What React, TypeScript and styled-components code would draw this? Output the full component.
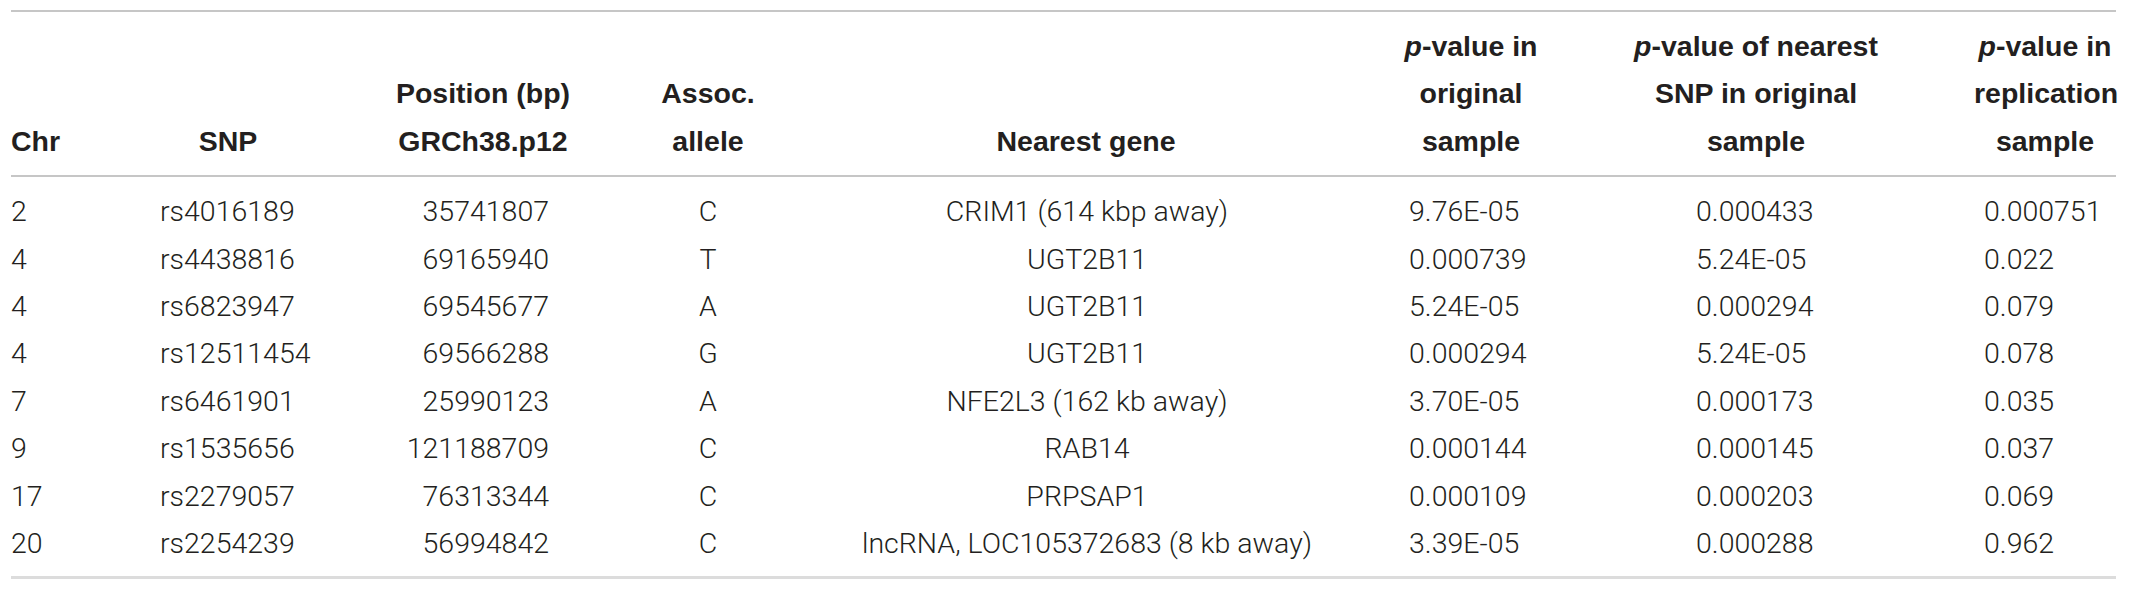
import React from "react";
import styled, { createGlobalStyle } from "styled-components";

const GlobalStyle = createGlobalStyle`
  html, body {
    margin: 0;
    padding: 0;
    background: #ffffff;
  }
`;

const COLS = "109px 216px 294px 156px 600px 170px 418px 142px";

type Align = "left" | "center" | "right";

interface ColSpec {
  head: Align;
  body: Align;
  headPl?: number;
  headPr?: number;
  bodyPl?: number;
  bodyPr?: number;
}

const columns: ColSpec[] = [
  { head: "left", body: "left" },
  { head: "center", body: "left", bodyPl: 40 },
  { head: "center", body: "right", bodyPr: 81 },
  { head: "center", body: "center" },
  { head: "center", body: "center", bodyPl: 2 },
  { head: "center", body: "left", bodyPl: 23 },
  { head: "center", body: "left", headPr: 18, bodyPl: 140 },
  { head: "center", body: "left", bodyPl: 10 },
];

const Table = styled.div`
  margin: 10px 0 0 11px;
  width: 2105px;
  border-top: 2px solid #c6c6c6;
  border-bottom: 3px solid #dcdcdc;
  color: #231f20;
`;

const HeadRow = styled.div`
  display: grid;
  grid-template-columns: ${COLS};
  align-items: end;
  padding: 11px 0 10px;
  border-bottom: 2px solid #c6c6c6;
  font-family: "Liberation Sans", Arial, sans-serif;
  font-weight: 700;
  font-size: 28.5px;
  line-height: 47.4px;
`;

const Body = styled.div`
  padding: 11px 0 9px;
`;

const Row = styled.div`
  display: grid;
  grid-template-columns: ${COLS};
  font-family: Roboto, "Liberation Sans", Arial, sans-serif;
  font-weight: 300;
  font-size: 28.5px;
  line-height: 47.4px;
`;

const Cell = styled.div<{ $align: Align; $pl?: number; $pr?: number }>`
  text-align: ${(p) => p.$align};
  padding-left: ${(p) => p.$pl ?? 0}px;
  padding-right: ${(p) => p.$pr ?? 0}px;
  white-space: nowrap;
`;

const Line = styled.span`
  display: block;
`;

const P = styled.i`
  font-style: italic;
`;

const headers: React.ReactNode[][] = [
  ["Chr"],
  ["SNP"],
  ["Position (bp)", "GRCh38.p12"],
  ["Assoc.", "allele"],
  ["Nearest gene"],
  [
    <>
      <P>p</P>-value in
    </>,
    "original",
    "sample",
  ],
  [
    <>
      <P>p</P>-value of nearest
    </>,
    "SNP in original",
    "sample",
  ],
  [
    <>
      <P>p</P>-value in
    </>,
    "replication",
    "sample",
  ],
];

const rows: string[][] = [
  ["2", "rs4016189", "35741807", "C", "CRIM1 (614 kbp away)", "9.76E-05", "0.000433", "0.000751"],
  ["4", "rs4438816", "69165940", "T", "UGT2B11", "0.000739", "5.24E-05", "0.022"],
  ["4", "rs6823947", "69545677", "A", "UGT2B11", "5.24E-05", "0.000294", "0.079"],
  ["4", "rs12511454", "69566288", "G", "UGT2B11", "0.000294", "5.24E-05", "0.078"],
  ["7", "rs6461901", "25990123", "A", "NFE2L3 (162 kb away)", "3.70E-05", "0.000173", "0.035"],
  ["9", "rs1535656", "121188709", "C", "RAB14", "0.000144", "0.000145", "0.037"],
  ["17", "rs2279057", "76313344", "C", "PRPSAP1", "0.000109", "0.000203", "0.069"],
  ["20", "rs2254239", "56994842", "C", "lncRNA, LOC105372683 (8 kb away)", "3.39E-05", "0.000288", "0.962"],
];

export default function App() {
  return (
    <>
      <GlobalStyle />
      <Table>
        <HeadRow>
          {headers.map((lines, i) => (
            <Cell key={i} $align={columns[i].head} $pl={columns[i].headPl} $pr={columns[i].headPr}>
              {lines.map((l, j) => (
                <Line key={j}>{l}</Line>
              ))}
            </Cell>
          ))}
        </HeadRow>
        <Body>
          {rows.map((r, ri) => (
            <Row key={ri}>
              {r.map((v, ci) => (
                <Cell key={ci} $align={columns[ci].body} $pl={columns[ci].bodyPl} $pr={columns[ci].bodyPr}>
                  {v}
                </Cell>
              ))}
            </Row>
          ))}
        </Body>
      </Table>
    </>
  );
}
